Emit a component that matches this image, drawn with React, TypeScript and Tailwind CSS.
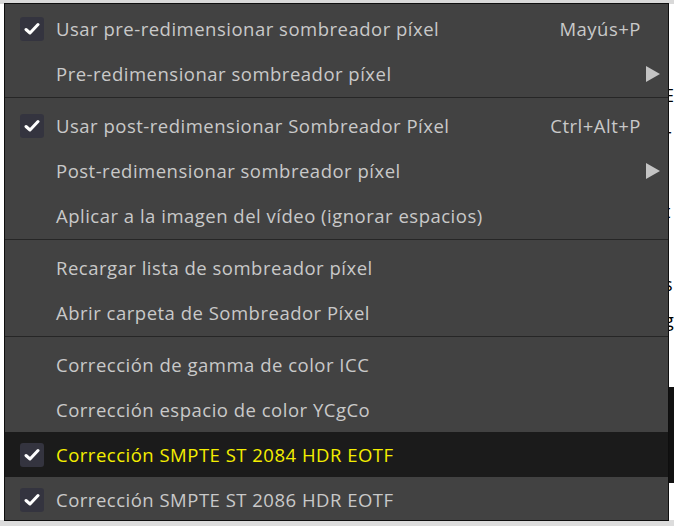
import { Fragment } from "react";

type Item =
  | { kind: "sep" }
  | {
      kind: "item";
      label: string;
      checked?: boolean;
      shortcut?: string;
      submenu?: boolean;
      active?: boolean;
    };

const items: Item[] = [
  { kind: "item", label: "Usar pre-redimensionar sombreador píxel", checked: true, shortcut: "Mayús+P" },
  { kind: "item", label: "Pre-redimensionar sombreador píxel", submenu: true },
  { kind: "sep" },
  { kind: "item", label: "Usar post-redimensionar Sombreador Píxel", checked: true, shortcut: "Ctrl+Alt+P" },
  { kind: "item", label: "Post-redimensionar sombreador píxel", submenu: true },
  { kind: "item", label: "Aplicar a la imagen del vídeo (ignorar espacios)" },
  { kind: "sep" },
  { kind: "item", label: "Recargar lista de sombreador píxel" },
  { kind: "item", label: "Abrir carpeta de Sombreador Píxel" },
  { kind: "sep" },
  { kind: "item", label: "Corrección de gamma de color ICC" },
  { kind: "item", label: "Corrección espacio de color YCgCo" },
  { kind: "item", label: "Corrección SMPTE ST 2084 HDR EOTF", checked: true, active: true },
  { kind: "item", label: "Corrección SMPTE ST 2086 HDR EOTF", checked: true },
];

function CheckBox() {
  return (
    <div className="w-[24px] h-[24px] rounded-[3px] bg-[#34343f] flex items-center justify-center">
      <svg width="16" height="14" viewBox="0 0 16 14">
        <path d="M2 7.5 L6 11 L14 2.5" fill="none" stroke="#ffffff" strokeWidth="3" strokeLinecap="round" strokeLinejoin="round" />
      </svg>
    </div>
  );
}

function Arrow() {
  return (
    <svg width="14" height="16" viewBox="0 0 14 16">
      <path d="M0 0 L14 8 L0 16 Z" fill="#c4c4c4" />
    </svg>
  );
}

export default function App() {
  return (
    <div
      className="relative w-[674px] h-[526px] overflow-hidden bg-white"
      style={{ fontFamily: '"Open Sans", "Noto Sans", sans-serif' }}
    >
      {/* background app behind the menu */}
      <div className="h-[4px] bg-[#d9d9d9]" />
      <div className="flex h-[516px]">
        <div className="w-[4px] bg-[#2e2e2e]" />
        <div className="flex-1 bg-white flex flex-col pl-[664px] text-black text-[18px] leading-none">
          <div className="mt-[82px]">E</div>
          <div className="mt-[22px]">r</div>
          <div className="mt-[58px]">t</div>
          <div className="mt-[55px]">s</div>
          <div className="mt-[18px]">g</div>
          <div className="mt-[58px] h-[96px] bg-[#111111]" />
        </div>
      </div>
      <div className="h-[6px] bg-[#dcdcdc]" />

      {/* context menu */}
      <div className="absolute left-[4px] top-[3px] w-[665px] h-[518px] overflow-hidden bg-[#424242] border border-[#0e0e0e] pt-[2px] flex flex-col">
        {items.map((it, i) =>
          it.kind === "sep" ? (
            <div key={i} className="h-[7px] shrink-0 flex flex-col pt-[1px]">
              <div className="h-px bg-[#262626]" />
            </div>
          ) : (
            <Fragment key={i}>
              <div
                className={`h-[45px] shrink-0 flex items-center ${it.active ? "bg-[#1b1b1b]" : ""}`}
              >
                <div className="w-[51px] pl-[15px] flex items-center">{it.checked && <CheckBox />}</div>
                <div
                  className={`flex-1 text-[18.5px] tracking-[0.5px] whitespace-nowrap ${it.active ? "text-[#f4ee00]" : "text-[#c9c9c9]"}`}
                >
                  {it.label}
                </div>
                {it.shortcut && (
                  <div className="pr-[27px] text-[18.5px] tracking-[0.5px] text-[#c9c9c9]">{it.shortcut}</div>
                )}
                {it.submenu && (
                  <div className="pr-[8px] flex items-center">
                    <Arrow />
                  </div>
                )}
              </div>
            </Fragment>
          )
        )}
      </div>
    </div>
  );
}
